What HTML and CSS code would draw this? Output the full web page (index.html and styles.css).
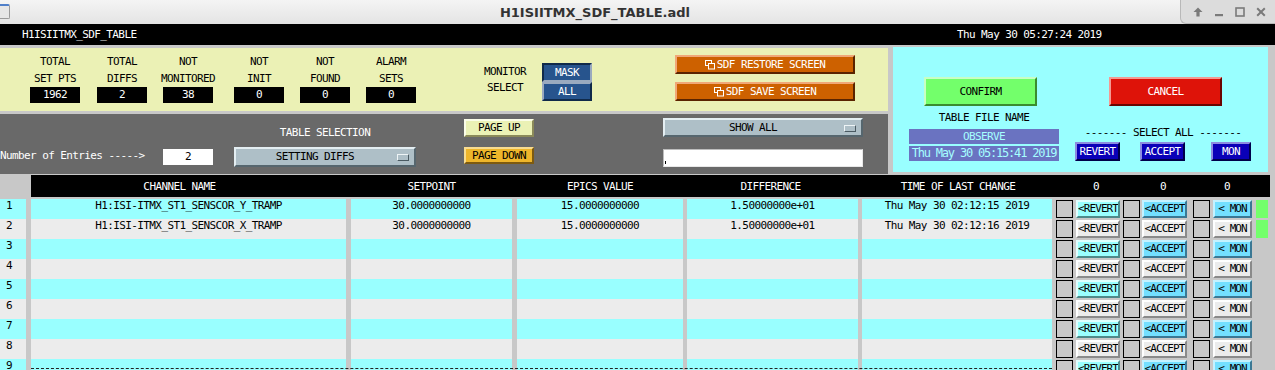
FILE: index.html
```html
<!DOCTYPE html>
<html lang="en">
<head>
    <meta charset="UTF-8">
    <title>H1ISIITMX_SDF_TABLE.adl</title>
    <link rel="stylesheet" href="styles.css">
</head>
<body>

    <div class="titlebar">
        <div class="app-icon"></div>
        <div class="title">H1ISIITMX_SDF_TABLE.adl</div>
        <div class="win-buttons">
            <svg width="10" height="10" viewBox="0 0 10 10"><path d="M5 0.5 L9.5 5 H6.6 V9.5 H3.4 V5 H0.5 Z" fill="#7a7a7a"/></svg>
            <svg width="10" height="10" viewBox="0 0 10 10"><rect x="1" y="7" width="8" height="2.2" fill="#7a7a7a"/></svg>
            <svg width="10" height="10" viewBox="0 0 10 10"><rect x="1" y="1" width="8" height="8" fill="none" stroke="#7a7a7a" stroke-width="1.6"/></svg>
            <svg width="10" height="10" viewBox="0 0 10 10"><path d="M1.2 1.2 L8.8 8.8 M8.8 1.2 L1.2 8.8" stroke="#7a7a7a" stroke-width="2"/></svg>
        </div>
    </div>

    <div class="topbar">
        <div class="screen-name">H1ISIITMX_SDF_TABLE</div>
        <div class="clock">Thu May 30 05:27:24 2019</div>
    </div>

    <div class="controls">
        <div class="left-col">
            <div class="yellow-panel">
                <div class="stats">
                    <div class="stat"><div class="stat-label">TOTAL<br>SET PTS</div><div class="stat-value">1962</div></div>
                    <div class="stat"><div class="stat-label">TOTAL<br>DIFFS</div><div class="stat-value">2</div></div>
                    <div class="stat"><div class="stat-label">NOT<br>MONITORED</div><div class="stat-value">38</div></div>
                    <div class="stat"><div class="stat-label">NOT<br>INIT</div><div class="stat-value">0</div></div>
                    <div class="stat"><div class="stat-label">NOT<br>FOUND</div><div class="stat-value">0</div></div>
                    <div class="stat"><div class="stat-label">ALARM<br>SETS</div><div class="stat-value">0</div></div>
                </div>
                <div class="monitor-label">MONITOR<br>SELECT</div>
                <div class="monitor-choice">
                    <div class="choice selected">MASK</div>
                    <div class="choice">ALL</div>
                </div>
                <div class="screen-buttons">
                    <div class="orange-btn">
                        <svg width="11" height="10" viewBox="0 0 11 10"><rect x="0.5" y="0.5" width="6" height="5" fill="none" stroke="#fff"/><rect x="3.5" y="3.5" width="6" height="5.5" fill="#cd6100" stroke="#fff"/></svg>SDF RESTORE SCREEN
                    </div>
                    <div class="orange-btn">
                        <svg width="11" height="10" viewBox="0 0 11 10"><rect x="0.5" y="0.5" width="6" height="5" fill="none" stroke="#fff"/><rect x="3.5" y="3.5" width="6" height="5.5" fill="#cd6100" stroke="#fff"/></svg>SDF SAVE SCREEN
                    </div>
                </div>
            </div>

            <div class="dark-panel">
                <div class="entries-label">Number of Entries -----&gt;</div>
                <div class="entries-value">2</div>
                <div class="table-select">
                    <div class="select-label">TABLE SELECTION</div>
                    <div class="menu">SETTING DIFFS<span class="menu-mark"></span></div>
                </div>
                <div class="paging">
                    <div class="page-btn page-up">PAGE UP</div>
                    <div class="page-btn page-down">PAGE DOWN</div>
                </div>
                <div class="filter">
                    <div class="menu show-all">SHOW ALL<span class="menu-mark"></span></div>
                    <div class="filter-field"></div>
                </div>
            </div>
        </div>

        <div class="cyan-panel">
            <div class="file-col">
                <div class="big-btn confirm">CONFIRM</div>
                <div class="file-label">TABLE FILE NAME</div>
                <div class="file-box">OBSERVE</div>
                <div class="file-box">Thu May 30 05:15:41 2019</div>
            </div>
            <div class="select-col">
                <div class="big-btn cancel">CANCEL</div>
                <div class="select-all-label">------- SELECT ALL -------</div>
                <div class="select-all">
                    <div class="blue-btn revert">REVERT</div>
                    <div class="blue-btn accept">ACCEPT</div>
                    <div class="blue-btn mon">MON</div>
                </div>
            </div>
        </div>
    </div>

    <div class="table-head">
        <div class="h-ch">CHANNEL NAME</div>
        <div class="h-sp">SETPOINT</div>
        <div class="h-ev">EPICS VALUE</div>
        <div class="h-diff">DIFFERENCE</div>
        <div class="h-time">TIME OF LAST CHANGE</div>
        <div class="h-count c1">0</div>
        <div class="h-count c2">0</div>
        <div class="h-count c3">0</div>
    </div>

    <div class="rows">
        <div class="row odd">
            <div class="cell num">1</div>
            <div class="cell ch">H1:ISI-ITMX_ST1_SENSCOR_Y_TRAMP</div>
            <div class="cell sp">30.0000000000</div>
            <div class="cell ev">15.0000000000</div>
            <div class="cell diff">1.50000000e+01</div>
            <div class="cell time">Thu May 30 02:12:15 2019</div>
            <div class="row-ctrl"><div class="box"></div><div class="rbtn revert">&lt;REVERT</div><div class="box"></div><div class="rbtn accept">&lt;ACCEPT</div><div class="box box-mon"></div><div class="rbtn mon">&lt; MON</div><div class="led"></div></div>
        </div>
        <div class="row even">
            <div class="cell num">2</div>
            <div class="cell ch">H1:ISI-ITMX_ST1_SENSCOR_X_TRAMP</div>
            <div class="cell sp">30.0000000000</div>
            <div class="cell ev">15.0000000000</div>
            <div class="cell diff">1.50000000e+01</div>
            <div class="cell time">Thu May 30 02:12:16 2019</div>
            <div class="row-ctrl"><div class="box"></div><div class="rbtn revert">&lt;REVERT</div><div class="box"></div><div class="rbtn accept">&lt;ACCEPT</div><div class="box box-mon"></div><div class="rbtn mon">&lt; MON</div><div class="led"></div></div>
        </div>
        <div class="row odd">
            <div class="cell num">3</div>
            <div class="cell ch"></div><div class="cell sp"></div><div class="cell ev"></div><div class="cell diff"></div><div class="cell time"></div>
            <div class="row-ctrl"><div class="box"></div><div class="rbtn revert">&lt;REVERT</div><div class="box"></div><div class="rbtn accept">&lt;ACCEPT</div><div class="box box-mon"></div><div class="rbtn mon">&lt; MON</div></div>
        </div>
        <div class="row even">
            <div class="cell num">4</div>
            <div class="cell ch"></div><div class="cell sp"></div><div class="cell ev"></div><div class="cell diff"></div><div class="cell time"></div>
            <div class="row-ctrl"><div class="box"></div><div class="rbtn revert">&lt;REVERT</div><div class="box"></div><div class="rbtn accept">&lt;ACCEPT</div><div class="box box-mon"></div><div class="rbtn mon">&lt; MON</div></div>
        </div>
        <div class="row odd">
            <div class="cell num">5</div>
            <div class="cell ch"></div><div class="cell sp"></div><div class="cell ev"></div><div class="cell diff"></div><div class="cell time"></div>
            <div class="row-ctrl"><div class="box"></div><div class="rbtn revert">&lt;REVERT</div><div class="box"></div><div class="rbtn accept">&lt;ACCEPT</div><div class="box box-mon"></div><div class="rbtn mon">&lt; MON</div></div>
        </div>
        <div class="row even">
            <div class="cell num">6</div>
            <div class="cell ch"></div><div class="cell sp"></div><div class="cell ev"></div><div class="cell diff"></div><div class="cell time"></div>
            <div class="row-ctrl"><div class="box"></div><div class="rbtn revert">&lt;REVERT</div><div class="box"></div><div class="rbtn accept">&lt;ACCEPT</div><div class="box box-mon"></div><div class="rbtn mon">&lt; MON</div></div>
        </div>
        <div class="row odd">
            <div class="cell num">7</div>
            <div class="cell ch"></div><div class="cell sp"></div><div class="cell ev"></div><div class="cell diff"></div><div class="cell time"></div>
            <div class="row-ctrl"><div class="box"></div><div class="rbtn revert">&lt;REVERT</div><div class="box"></div><div class="rbtn accept">&lt;ACCEPT</div><div class="box box-mon"></div><div class="rbtn mon">&lt; MON</div></div>
        </div>
        <div class="row even">
            <div class="cell num">8</div>
            <div class="cell ch"></div><div class="cell sp"></div><div class="cell ev"></div><div class="cell diff"></div><div class="cell time"></div>
            <div class="row-ctrl"><div class="box"></div><div class="rbtn revert">&lt;REVERT</div><div class="box"></div><div class="rbtn accept">&lt;ACCEPT</div><div class="box box-mon"></div><div class="rbtn mon">&lt; MON</div></div>
        </div>
        <div class="row odd last">
            <div class="cell num">9</div>
            <div class="cell ch"></div><div class="cell sp"></div><div class="cell ev"></div><div class="cell diff"></div><div class="cell time"></div>
            <div class="row-ctrl"><div class="box"></div><div class="rbtn revert">&lt;REVERT</div><div class="box"></div><div class="rbtn accept">&lt;ACCEPT</div><div class="box box-mon"></div><div class="rbtn mon">&lt; MON</div></div>
        </div>
    </div>

</body>
</html>
```

FILE: styles.css
```css
* {
    box-sizing: border-box;
}

body {
    margin: 0;
    width: 1275px;
    height: 370px;
    overflow: hidden;
    background: #c8c8c8;
    font-family: "DejaVu Sans Mono", monospace;
    font-size: 11px;
    letter-spacing: -0.6px;
    color: #000;
}

/* window frame */
.titlebar {
    height: 24px;
    display: flex;
    align-items: center;
    background: linear-gradient(#f4f4f4, #e4e4e4);
    font-family: "DejaVu Sans", sans-serif;
    letter-spacing: 0;
}

.app-icon {
    width: 10px;
    height: 15px;
    margin-top: -2px;
    background: #e6e6e6;
    border: 1px solid #9a9a9a;
    border-left: none;
    border-top: 2px solid #4f7fc9;
    border-radius: 0 2px 2px 0;
}

.title {
    flex: 1;
    text-align: center;
    font-weight: bold;
    font-size: 13px;
    color: #333;
}

.win-buttons {
    width: 95px;
    height: 24px;
    display: flex;
    align-items: center;
    justify-content: space-around;
    padding: 0 4px 0 6px;
    background: #dcdcdc;
    border-left: 1px solid #b8b8b8;
    border-bottom: 1px solid #b8b8b8;
    border-bottom-left-radius: 6px;
}

.topbar {
    height: 21px;
    display: flex;
    align-items: center;
    background: #000;
    color: #fff;
}

.screen-name {
    width: 957px;
    padding-left: 22px;
}

/* top controls */
.controls {
    display: flex;
    height: 130px;
}

.left-col {
    width: 888px;
    padding-top: 3px;
}

.yellow-panel {
    height: 63px;
    display: flex;
    background: #ebf1b5;
}

.stats {
    display: grid;
    grid-template-columns: 67px 66px 71px 66px 66px 50px;
    margin-left: 30px;
    padding-top: 5px;
}

.stat {
    width: 50px;
    display: flex;
    flex-direction: column;
    align-items: center;
}

.stat-label {
    line-height: 17px;
    text-align: center;
    white-space: nowrap;
}

.stat-value {
    width: 50px;
    height: 16px;
    line-height: 16px;
    background: #000;
    color: #fff;
    text-align: center;
}

.monitor-label {
    width: 60px;
    margin: 16px 0 0 59px;
    line-height: 16px;
    text-align: center;
}

.monitor-choice {
    width: 50px;
    margin: 15px 0 0 7px;
}

.choice {
    height: 19px;
    line-height: 15px;
    text-align: center;
    color: #fff;
    background: #27548d;
    border: 2px solid;
    border-color: #9aaabf #102a4a #102a4a #9aaabf;
}

.choice.selected {
    border-color: #102a4a #9aaabf #9aaabf #102a4a;
}

.screen-buttons {
    width: 180px;
    margin: 7px 0 0 83px;
}

.orange-btn {
    height: 19px;
    margin-bottom: 8px;
    display: flex;
    align-items: center;
    justify-content: center;
    background: #cd6100;
    color: #fff;
    border: 2px solid;
    border-color: #f0a878 #5a2400 #5a2400 #f0a878;
}

.orange-btn svg {
    margin-right: 1px;
}

.dark-panel {
    height: 60px;
    margin-top: 3px;
    display: flex;
    background: #696969;
    color: #fff;
}

.entries-label {
    width: 145px;
    margin-top: 34px;
    line-height: 16px;
    white-space: nowrap;
}

.entries-value {
    width: 50px;
    height: 16px;
    margin: 35px 0 0 18px;
    line-height: 16px;
    text-align: center;
    background: #fff;
    color: #000;
}

.table-select {
    width: 182px;
    margin: 11px 0 0 21px;
}

.select-label {
    line-height: 16px;
    text-align: center;
}

.menu {
    position: relative;
    height: 20px;
    margin-top: 6px;
    padding-right: 20px;
    line-height: 16px;
    text-align: center;
    background: #aebfc7;
    color: #000;
    border: 2px solid;
    border-color: #e4eef2 #56666e #56666e #e4eef2;
}

.menu-mark {
    position: absolute;
    right: 5px;
    top: 5px;
    width: 12px;
    height: 7px;
    background: #aebfc7;
    border: 1px solid;
    border-color: #eef4f6 #4a5a62 #4a5a62 #eef4f6;
}

.paging {
    width: 70px;
    margin: 5px 0 0 48px;
}

.page-btn {
    height: 18px;
    line-height: 14px;
    text-align: center;
    color: #000;
    border: 2px solid;
}

.page-up {
    background: #ebf1b5;
    border-color: #fbfde8 #8b8a5a #8b8a5a #fbfde8;
}

.page-down {
    height: 17px;
    margin-top: 10px;
    line-height: 13px;
    background: #eeb62b;
    border-color: #f8dc90 #7d5a10 #7d5a10 #f8dc90;
}

.filter {
    width: 200px;
    margin: 4px 0 0 129px;
}

.show-all {
    height: 19px;
    margin-top: 0;
    line-height: 15px;
}

.filter-field {
    position: relative;
    height: 18px;
    margin-top: 12px;
    background: #fff;
    border: 1px solid;
    border-color: #bdbdbd #e8e8e8 #e8e8e8 #bdbdbd;
}

.filter-field::before {
    content: "";
    position: absolute;
    left: 1px;
    bottom: 2px;
    width: 1px;
    height: 3px;
    background: #000;
}

.cyan-panel {
    width: 375px;
    height: 125px;
    margin: 2px 0 0 5px;
    display: flex;
    background: #99ffff;
}

.file-col {
    width: 150px;
    margin-left: 16px;
    padding-top: 30px;
}

.big-btn {
    width: 113px;
    height: 29px;
    line-height: 25px;
    text-align: center;
    border: 2px solid;
}

.confirm {
    margin-left: 15px;
    background: #73ff6b;
    border-color: #c8ffc4 #3a8c30 #3a8c30 #c8ffc4;
}

.cancel {
    margin-left: 34px;
    background: #de1309;
    color: #fff;
    border-color: #f49a92 #6a0400 #6a0400 #f49a92;
}

.file-label {
    margin-top: 4px;
    line-height: 16px;
    text-align: center;
}

.file-box {
    height: 15px;
    line-height: 15px;
    margin-top: 3px;
    text-align: center;
    background: #6a73c1;
    color: #a6ffff;
}

.file-box + .file-box {
    margin-top: 2px;
    font-size: 12px;
    letter-spacing: -1.2px;
}

.select-col {
    width: 176px;
    margin-left: 16px;
    padding-top: 30px;
}

.select-all-label {
    margin-top: 19px;
    line-height: 16px;
    text-align: center;
    white-space: nowrap;
}

.select-all {
    display: flex;
    margin-top: 1px;
}

.blue-btn {
    height: 19px;
    line-height: 15px;
    text-align: center;
    color: #fff;
    background: #0a00b8;
    border: 2px solid;
    border-color: #8c8ce0 #00004a #00004a #8c8ce0;
}

.blue-btn.revert { width: 45px; }
.blue-btn.accept { width: 45px; margin-left: 20px; }
.blue-btn.mon { width: 40px; margin-left: 26px; }

/* table */
.table-head {
    display: flex;
    align-items: center;
    height: 22px;
    margin: 0 5px 0 31px;
    background: #000;
    color: #fff;
    white-space: nowrap;
}

.table-head > div {
    text-align: center;
}

.h-ch { width: 315px; padding-right: 18px; }
.h-sp { width: 171px; }
.h-ev { width: 166px; }
.h-diff { width: 175px; }
.h-time { width: 194px; padding-left: 6px; }
.h-count.c1 { width: 88px; }
.h-count.c2 { width: 46px; }
.h-count.c3 { width: 82px; }

.rows {
    position: relative;
    margin-top: 2px;
}

.row {
    display: flex;
    height: 20px;
}

.cell {
    height: 20px;
    line-height: 14px;
    white-space: nowrap;
    text-align: center;
}

.row.odd .cell { background: #99ffff; }
.row.even .cell { background: #ececec; }

.num { width: 26px; padding-left: 6px; text-align: left; }
.ch { width: 315px; margin-left: 5px; }
.sp { width: 161px; margin-left: 5px; }
.ev { width: 166px; margin-left: 5px; }
.diff { width: 171px; margin-left: 4px; }
.time { width: 190px; margin-left: 4px; }

.row.last::after {
    content: "";
    position: absolute;
    left: 31px;
    width: 1021px;
    margin-top: 9px;
    border-top: 1px dashed #222;
}

.row-ctrl {
    display: flex;
    padding-top: 1px;
}

.box {
    width: 17px;
    height: 18px;
    margin-left: 3px;
    background: #c8c8c8;
    border: 1px solid #000;
}

.row-ctrl .box:first-child { margin-left: 4px; }
.row-ctrl .box-mon { margin-left: 6px; }

.rbtn {
    height: 18px;
    line-height: 14px;
    overflow: hidden;
    text-align: center;
    letter-spacing: -0.9px;
    border: 2px solid;
}

.rbtn.revert { width: 44px; margin-left: 3px; }
.rbtn.accept { width: 45px; margin-left: 2px; }
.rbtn.mon { width: 39px; margin-left: 3px; }

.row.odd .rbtn.revert {
    background: #99ffff;
    border-color: #e0ffff #4e8a8a #4e8a8a #e0ffff;
}

.row.odd .rbtn.accept,
.row.odd .rbtn.mon {
    background: #73dfff;
    border-color: #c4f2ff #3a7894 #3a7894 #c4f2ff;
}

.row.even .rbtn {
    background: #ececec;
    border-color: #ffffff #8a8a8a #8a8a8a #ffffff;
}

.led {
    width: 12px;
    height: 18px;
    margin-left: 4px;
    background: #73ff6b;
}
```
